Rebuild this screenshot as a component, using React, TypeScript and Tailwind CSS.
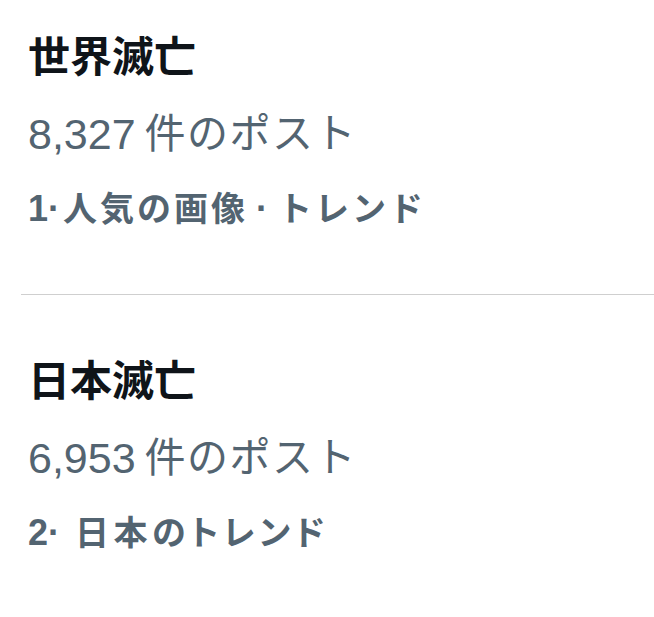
import React from "react";

const font = { fontFamily: '"Liberation Sans", "Noto Sans CJK JP", sans-serif' };
const palt = { fontFeatureSettings: '"palt"' };

export default function App() {
  return (
    <div className="w-[654px] h-[617px] bg-white overflow-hidden pt-[20px]" style={font}>
      <div className="flex flex-col pl-[28px]">
        <div className="h-[76px] flex items-center text-[42px] font-bold text-[#0f1419] leading-none">世界滅亡</div>
        <div className="h-[76px] flex items-center text-[41px] text-[#536471] leading-none whitespace-pre">
          <span className="text-[43px]">8,327</span>
          <span className="ml-[9px] tracking-[1.5px]">件のポスト</span>
        </div>
        <div className="h-[74px] flex items-center text-[34px] font-bold text-[#536471] leading-none whitespace-pre">
          <span className="text-[36px]">1·</span>
          <span className="ml-[3px] tracking-[3px]">人気の画像</span>
          <span className="ml-[8px] text-[36px]">·</span>
          <span className="ml-[10px] tracking-[3px]">トレンド</span>
        </div>
      </div>
      <div className="mt-[48px] ml-[21px] h-px bg-[#cfcfcf]" />
      <div className="mt-[49px] flex flex-col pl-[28px]">
        <div className="h-[76px] flex items-center text-[42px] font-bold text-[#0f1419] leading-none">日本滅亡</div>
        <div className="h-[76px] flex items-center text-[41px] text-[#536471] leading-none whitespace-pre">
          <span className="text-[43px]">6,953</span>
          <span className="ml-[9px] tracking-[1.5px]">件のポスト</span>
        </div>
        <div className="h-[74px] flex items-center text-[34px] font-bold text-[#536471] leading-none whitespace-pre">
          <span className="text-[36px]">2·</span>
          <span className="ml-[15px] tracking-[4.5px]" style={palt}>日本のトレンド</span>
        </div>
      </div>
    </div>
  );
}
